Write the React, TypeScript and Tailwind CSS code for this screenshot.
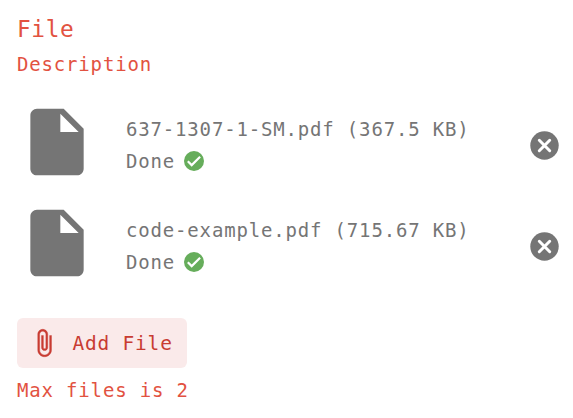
type FileItem = { name: string; size: string };

const files: FileItem[] = [
  { name: "637-1307-1-SM.pdf", size: "367.5 KB" },
  { name: "code-example.pdf", size: "715.67 KB" },
];

function DocumentIcon() {
  return (
    <svg viewBox="0 0 24 24" fill="currentColor" className="size-20 shrink-0">
      <path d="M6 2c-1.1 0-1.99.9-1.99 2L4 20c0 1.1.89 2 1.99 2H18c1.1 0 2-.9 2-2V8l-6-6H6zm7 7V3.5L18.5 9H13z" />
    </svg>
  );
}

function CheckIcon() {
  return (
    <svg viewBox="0 0 24 24" className="size-6">
      <circle cx="12" cy="12" r="10" fill="#66ad5b" />
      <path d="M5.8 12.2l3.9 3.9 8.4-8.4" fill="none" stroke="#fff" strokeWidth="2.2" />
    </svg>
  );
}

function ClipIcon() {
  return (
    <svg viewBox="0 0 24 24" fill="currentColor" stroke="currentColor" strokeWidth="0.3" className="size-[30px] shrink-0">
      <path d="M16.5 6v11.5c0 2.21-1.79 4-4 4s-4-1.79-4-4V5c0-1.38 1.12-2.5 2.5-2.5s2.5 1.12 2.5 2.5v10.5c0 .55-.45 1-1 1s-1-.45-1-1V6H10v9.5c0 1.38 1.12 2.5 2.5 2.5s2.5-1.12 2.5-2.5V5c0-2.21-1.79-4-4-4S7 2.79 7 5v12.5c0 3.04 2.46 5.5 5.5 5.5s5.5-2.46 5.5-5.5V6h-1.5z" />
    </svg>
  );
}

function FileRow({ file }: { file: FileItem }) {
  return (
    <li className="flex h-[101.2px] items-start text-[#757575]">
      <DocumentIcon />
      <div className="ml-[29px] mt-[11.5px] whitespace-pre">
        <p className="h-8 leading-8">{`${file.name} (${file.size})`}</p>
        <p className="flex h-8 items-center leading-8">
          Done
          <span className="ml-[6.5px]">
            <CheckIcon />
          </span>
        </p>
      </div>
      <button aria-label="Remove file" className="ml-auto mt-[29.5px]">
        <svg viewBox="0 0 29 29" className="size-[29px]">
          <circle cx="14.5" cy="14.5" r="14.2" fill="#757575" />
          <path d="M9.3 9.3l10.4 10.4M19.7 9.3l-10.4 10.4" stroke="#fff" strokeWidth="3" strokeLinecap="round" />
        </svg>
      </button>
    </li>
  );
}

export default function App() {
  return (
    <main className="flex h-[418px] w-[573px] flex-col items-start overflow-hidden bg-white pl-[17px] pr-[14.5px] font-['DejaVu_Sans_Mono',monospace] text-[19px] tracking-[0.83px] text-[#e25241]">
      <h1 className="mt-[11px] h-9 text-[22.8px] leading-9 tracking-[0.6px]">File</h1>
      <p className="mt-px h-8 leading-8">Description</p>
      <ul className="mt-[21.5px] w-full">
        {files.map((file) => (
          <FileRow key={file.name} file={file} />
        ))}
      </ul>
      <button className="mt-[14px] flex h-[50px] w-[170px] items-center rounded-md bg-[#faeaea] pl-3 text-[19.5px] tracking-[0.78px] text-[#c83c32]">
        <ClipIcon />
        <span className="ml-[13.5px] whitespace-nowrap pt-0.5">Add File</span>
      </button>
      <p className="mt-1.5 h-8 leading-8">Max files is 2</p>
    </main>
  );
}
